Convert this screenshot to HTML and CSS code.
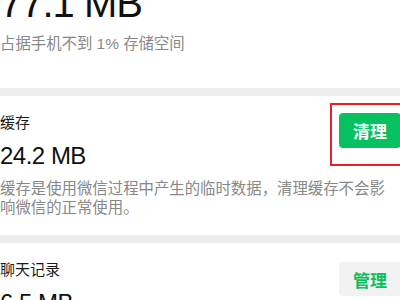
FILE: index.html
```html
<!DOCTYPE html>
<html lang="zh-CN">
<head>
  <meta charset="UTF-8">
  <meta name="viewport" content="width=device-width, initial-scale=1.0">
  <title>存储空间</title>
  <link rel="stylesheet" href="styles.css">
</head>
<body>
  <div class="page">
    <div class="summary">
      <div class="total">77.1 MB</div>
      <div class="summary-note">占据手机不到 1% 存储空间</div>
    </div>

    <div class="card">
      <div class="card-row">
        <div class="card-info">
          <div class="card-title">缓存</div>
          <div class="card-size">24.2 MB</div>
        </div>
        <button class="button primary">清理<span class="mark"></span></button>
      </div>
      <div class="card-desc">缓存是使用微信过程中产生的临时数据，清理缓存不会影响微信的正常使用。</div>
    </div>

    <div class="card">
      <div class="card-row">
        <div class="card-info">
          <div class="card-title">聊天记录</div>
          <div class="card-size">6.5 MB</div>
        </div>
        <button class="button secondary">管理</button>
      </div>
    </div>
  </div>
</body>
</html>
```

FILE: styles.css
```css
body {
  margin: 0;
  background-color: #ededed;
  font-family: "Liberation Sans", "Noto Sans CJK SC", sans-serif;
  color: #111;
  overflow: hidden;
}

.page {
  width: 401px;
}

.summary {
  background-color: #fff;
  padding-bottom: 34px;
}

.total {
  margin-top: -17px;
  font-size: 40px;
  line-height: 40px;
  letter-spacing: -1px;
}

.summary-note {
  margin-top: 10px;
  font-size: 15.4px;
  line-height: 21px;
  color: #888;
}

.card {
  background-color: #fff;
  margin-top: 8px;
  padding: 16px 0 18px;
}

.card-row {
  display: flex;
  justify-content: space-between;
  align-items: flex-start;
}

.card-title {
  font-size: 15px;
  line-height: 21px;
  color: #1a1a1a;
}

.card-size {
  margin-top: 8px;
  font-size: 24px;
  line-height: 30px;
  letter-spacing: -0.5px;
}

.card-desc {
  margin-top: 9px;
  padding-right: 8px;
  font-size: 15.4px;
  line-height: 18.5px;
  color: #888;
}

.button {
  position: relative;
  margin-top: 1px;
  height: 35px;
  padding: 0 14px;
  border: none;
  border-radius: 4px;
  font-family: inherit;
  font-size: 17px;
  font-weight: bold;
  cursor: pointer;
}

.button.primary {
  background-color: #07c160;
  color: #fff;
}

.button.secondary {
  margin-top: 3px;
  height: 34px;
  background-color: #f2f2f2;
  color: #07c160;
}

.mark {
  position: absolute;
  left: -9px;
  top: -10px;
  right: -20px;
  bottom: -18px;
  border: 2px solid #e8202a;
}
```
